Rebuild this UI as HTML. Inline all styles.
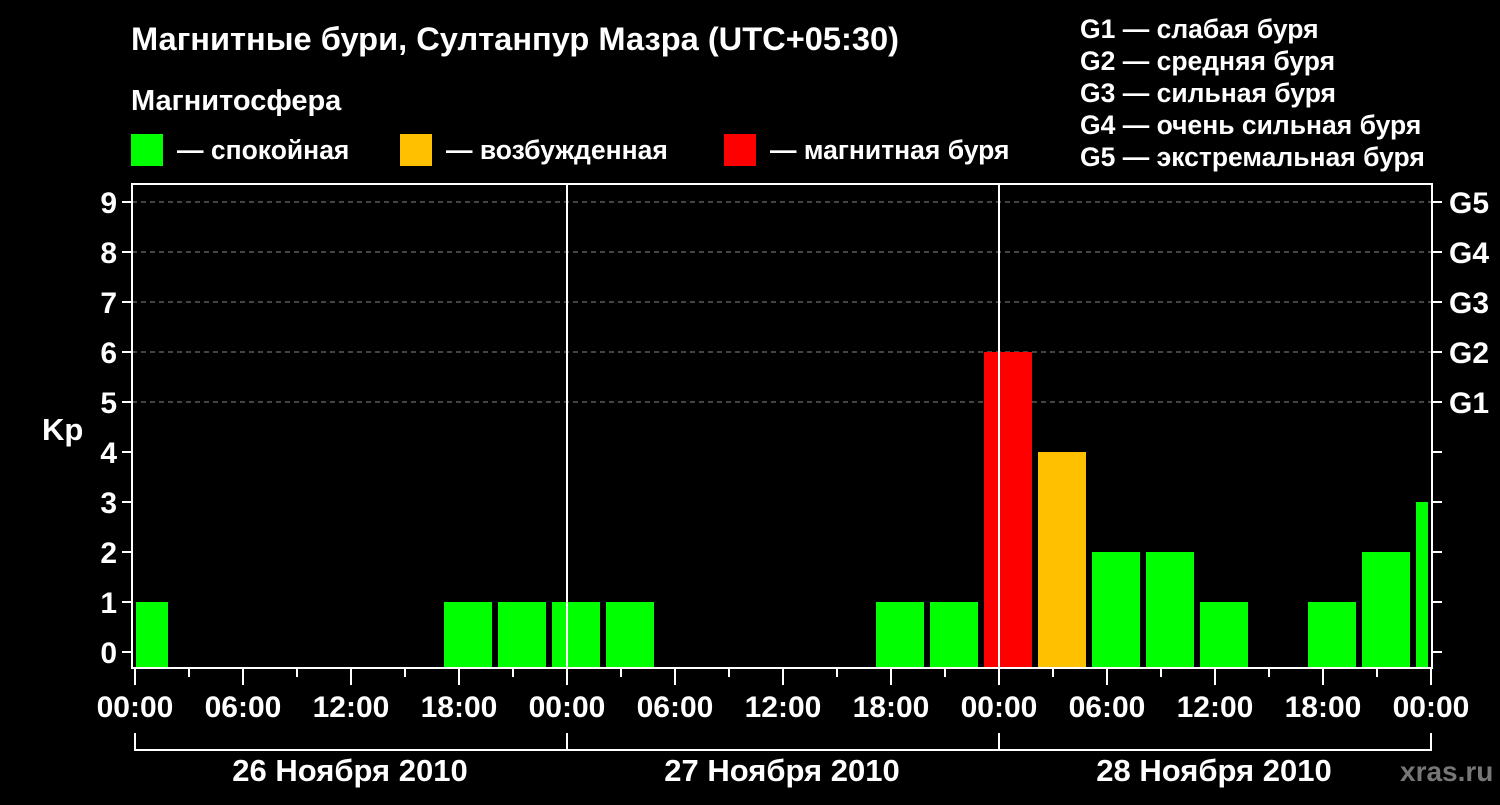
<!DOCTYPE html>
<html><head><meta charset="utf-8"><style>
html,body{margin:0;padding:0;background:#000;}
body{width:1500px;height:800px;overflow:hidden;font-family:"Liberation Sans",sans-serif;}
</style></head><body>
<svg width="1500" height="800" xmlns="http://www.w3.org/2000/svg" font-family="Liberation Sans, sans-serif" font-weight="bold" fill="#fff">
<rect width="1500" height="800" fill="#000"/>
<text x="131" y="50" font-size="32" textLength="768" lengthAdjust="spacingAndGlyphs">Магнитные бури, Султанпур Мазра (UTC+05:30)</text>
<text x="131" y="110" font-size="29">Магнитосфера</text>
<rect x="131" y="134" width="32" height="32" fill="#00ff00"/>
<text x="177" y="159" font-size="26.5">— спокойная</text>
<rect x="400" y="134" width="32" height="32" fill="#ffc000"/>
<text x="446" y="159" font-size="26.5">— возбужденная</text>
<rect x="724" y="134" width="32" height="32" fill="#ff0000"/>
<text x="770" y="159" font-size="26.5">— магнитная буря</text>
<g font-size="26.5">
<text x="1080" y="38">G1 — слабая буря</text>
<text x="1080" y="70">G2 — средняя буря</text>
<text x="1080" y="102">G3 — сильная буря</text>
<text x="1080" y="134">G4 — очень сильная буря</text>
<text x="1080" y="166">G5 — экстремальная буря</text>
</g>
<g stroke="#888" stroke-dasharray="5,4" stroke-width="1">
<line x1="132" y1="202" x2="1432" y2="202"/><line x1="132" y1="252" x2="1432" y2="252"/>
<line x1="132" y1="302" x2="1432" y2="302"/><line x1="132" y1="352" x2="1432" y2="352"/>
<line x1="132" y1="402" x2="1432" y2="402"/>
</g>
<g>
<rect x="136" y="602" width="32" height="66" fill="#00ff00"/>
<rect x="444" y="602" width="48" height="66" fill="#00ff00"/>
<rect x="498" y="602" width="48" height="66" fill="#00ff00"/>
<rect x="552" y="602" width="48" height="66" fill="#00ff00"/>
<rect x="606" y="602" width="48" height="66" fill="#00ff00"/>
<rect x="876" y="602" width="48" height="66" fill="#00ff00"/>
<rect x="930" y="602" width="48" height="66" fill="#00ff00"/>
<rect x="984" y="352" width="48" height="316" fill="#ff0000"/>
<rect x="1038" y="452" width="48" height="216" fill="#ffc000"/>
<rect x="1092" y="552" width="48" height="116" fill="#00ff00"/>
<rect x="1146" y="552" width="48" height="116" fill="#00ff00"/>
<rect x="1200" y="602" width="48" height="66" fill="#00ff00"/>
<rect x="1308" y="602" width="48" height="66" fill="#00ff00"/>
<rect x="1362" y="552" width="48" height="116" fill="#00ff00"/>
<rect x="1416" y="502" width="12" height="166" fill="#00ff00"/>
</g>
<g stroke="#fff" stroke-width="2" fill="none">
<rect x="132" y="184" width="1300" height="484"/>
<line x1="567" y1="184" x2="567" y2="668"/>
<line x1="999" y1="184" x2="999" y2="668"/>
<path d="M122 202h10M122 252h10M122 302h10M122 352h10M122 402h10M122 452h10M122 502h10M122 552h10M122 602h10M122 652h10"/>
<path d="M1432 202h10M1432 252h10M1432 302h10M1432 352h10M1432 402h10M1432 452h10M1432 502h10M1432 552h10M1432 602h10M1432 652h10"/>
<path d="M135 668v17M189 668v9M243 668v17M297 668v9M351 668v17M405 668v9M459 668v17M513 668v9M567 668v17M621 668v9M675 668v17M729 668v9M783 668v17M837 668v9M891 668v17M945 668v9M999 668v17M1053 668v9M1107 668v17M1161 668v9M1215 668v17M1269 668v9M1323 668v17M1377 668v9M1431 668v17"/>
<path d="M135 733v17H1431V733M567 733v17M999 733v17"/>
</g>
<g font-size="30" text-anchor="end">
<text x="117" y="213">9</text><text x="117" y="263">8</text><text x="117" y="313">7</text><text x="117" y="363">6</text><text x="117" y="413">5</text><text x="117" y="463">4</text><text x="117" y="513">3</text><text x="117" y="563">2</text><text x="117" y="613">1</text><text x="117" y="663">0</text>
</g>
<text x="42" y="440" font-size="31">Kp</text>
<g font-size="30">
<text x="1449" y="213">G5</text><text x="1449" y="263">G4</text><text x="1449" y="313">G3</text><text x="1449" y="363">G2</text><text x="1449" y="413">G1</text>
</g>
<g font-size="30" text-anchor="middle">
<text x="135" y="717">00:00</text><text x="243" y="717">06:00</text><text x="351" y="717">12:00</text><text x="459" y="717">18:00</text>
<text x="567" y="717">00:00</text><text x="675" y="717">06:00</text><text x="783" y="717">12:00</text><text x="891" y="717">18:00</text>
<text x="999" y="717">00:00</text><text x="1107" y="717">06:00</text><text x="1215" y="717">12:00</text><text x="1323" y="717">18:00</text>
<text x="1431" y="717">00:00</text>
<text x="350" y="781" font-size="31">26 Ноября 2010</text>
<text x="782" y="781" font-size="31">27 Ноября 2010</text>
<text x="1214" y="781" font-size="31">28 Ноября 2010</text>
</g>
<text x="1400" y="781" font-size="28" fill="#777">xras.ru</text>
</svg>
</body></html>
